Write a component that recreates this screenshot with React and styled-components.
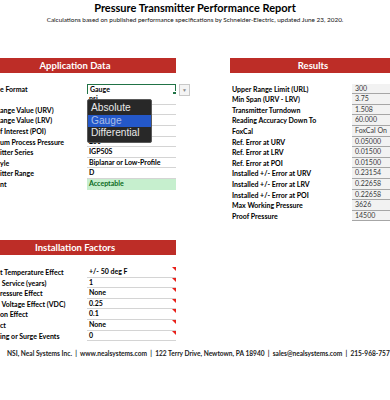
import { Fragment } from "react";
import styled, { createGlobalStyle } from "styled-components";

const GlobalStyle = createGlobalStyle`
  html, body {
    margin: 0;
    padding: 0;
    background: #ffffff;
    overflow: hidden;
  }
  body {
    font-family: Lato, "Open Sans", sans-serif;
    color: #000;
  }
`;

const ROW = 10.6;

const Page = styled.div`
  width: 390px;
  height: 400px;
  overflow: hidden;
  position: relative;
`;

const TitleBlock = styled.div`
  display: flex;
  flex-direction: column;
  align-items: center;
  padding-top: 1px;
`;

const Title = styled.div`
  font-size: 11px;
  font-weight: 700;
  line-height: 14px;
`;

const Subtitle = styled.div`
  font-size: 6.4px;
  line-height: 10px;
  color: #111;
`;

const Sheet = styled.div`
  display: flex;
  gap: 54px;
  margin-top: 33px;
  margin-left: -26px;
`;

const Column = styled.div`
  width: ${(p) => p.width}px;
  flex-shrink: 0;
  display: flex;
  flex-direction: column;
`;

const SectionHeader = styled.div`
  height: 15px;
  background: #bd2d27;
  color: #fff;
  font-weight: 700;
  font-size: 9.5px;
  display: flex;
  align-items: center;
  justify-content: center;
  margin-bottom: ${(p) => p.gap || 10.7}px;
  margin-top: ${(p) => p.top || 0}px;
`;

const Rows = styled.div`
  display: grid;
  grid-template-columns: ${(p) => p.cols};
  grid-auto-rows: ${ROW}px;
`;

const Label = styled.div`
  font-size: 7px;
  font-weight: 700;
  line-height: ${ROW}px;
  padding-left: ${(p) => p.pad || 0}px;
  white-space: pre;
  overflow: hidden;
`;

const Value = styled.div`
  position: relative;
  font-size: 7px;
  line-height: ${ROW - 1}px;
  padding-left: 2px;
  white-space: nowrap;
  border-bottom: 1px solid ${(p) => (p.plain ? "transparent" : "#d4d4d4")};
  font-weight: 700;
  background: ${(p) => (p.good ? "#c6efce" : "#fff")};
  color: ${(p) => (p.good ? "#0b6b1c" : "#000")};
`;

const ResultValue = styled.div`
  font-size: 7px;
  line-height: ${ROW - 1}px;
  padding-left: 3px;
  background: #f2f2f2;
  border-bottom: 1px solid #a6a6a6;
  color: #3a3a3a;
  white-space: nowrap;
`;

const Note = styled.span`
  position: absolute;
  top: 0;
  right: 0;
  width: 0;
  height: 0;
  border-top: 4px solid #e8201a;
  border-left: 4px solid transparent;
`;

const SelectCell = styled.div`
  position: relative;
  font-size: 7px;
  font-weight: 700;
  line-height: 9px;
  padding-left: 2px;
  margin-top: 0.5px;
  height: 9px;
  border: 1px solid #217346;
`;

const Handle = styled.span`
  position: absolute;
  right: -2px;
  bottom: -2px;
  width: 3px;
  height: 3px;
  background: #217346;
  border: 0.5px solid #fff;
`;

const ArrowButton = styled.div`
  position: absolute;
  left: 91px;
  top: -1px;
  width: 9px;
  height: 10px;
  background: #f4f4f4;
  border: 1px solid #c8c8c8;
  display: flex;
  align-items: center;
  justify-content: center;
  color: #8a8a8a;
  font-size: 5px;
`;

const Menu = styled.div`
  position: absolute;
  left: -1px;
  top: 14px;
  width: 63px;
  padding: 2px 0;
  background: #282828;
  border: 1px solid #5a5a5a;
  border-radius: 2px;
  z-index: 2;
  display: flex;
  flex-direction: column;
`;

const MenuItem = styled.div`
  font-family: "Liberation Sans", Arial, sans-serif;
  font-weight: 400;
  font-size: 10.2px;
  line-height: 12.5px;
  padding-left: 3px;
  color: ${(p) => (p.active ? "#a9bde6" : "#e8e8e8")};
  background: ${(p) => (p.active ? "#2458c9" : "transparent")};
`;

const Footer = styled.div`
  margin-top: 8px;
  padding-left: 7px;
  font-size: 6.6px;
  font-weight: 700;
  color: #222;
  white-space: pre;
`;

const appData = [
  ["", "psi"],
  ["ange Value (URV)", ""],
  ["ange Value (LRV)", ""],
  ["f Interest (POI)", ""],
  ["um Process Pressure", "250"],
  ["itter Series", "IGP50S"],
  ["yle", "Biplanar or Low-Profile"],
  ["itter Range", "D"],
];

const results = [
  ["Upper Range Limit (URL)", "300"],
  ["Min Span (URV - LRV)", "3.75"],
  ["Transmitter Turndown", "1.508"],
  ["Reading Accuracy Down To", "60.000"],
  ["FoxCal", "FoxCal On"],
  ["Ref. Error at URV", "0.05000"],
  ["Ref. Error at LRV", "0.01500"],
  ["Ref. Error at POI", "0.01500"],
  ["Installed +/- Error at URV", "0.23154"],
  ["Installed +/- Error at LRV", "0.22658"],
  ["Installed +/- Error at POI", "0.22658"],
  ["Max Working Pressure", "3626"],
  ["Proof Pressure", "14500"],
];

const factors = [
  ["t Temperature Effect", "+/- 50 deg F"],
  [" Service (years)", "1"],
  ["ressure Effect", "None"],
  [" Voltage Effect (VDC)", "0.25"],
  ["on Effect", "0.1"],
  ["ct", "None"],
  ["ing or Surge Events", "0"],
];

export default function App() {
  return (
    <Page>
      <GlobalStyle />
      <TitleBlock>
        <Title>Pressure Transmitter Performance Report</Title>
        <Subtitle>
          Calculations based on published performance specifications by
          Schneider-Electric, updated June 23, 2020.
        </Subtitle>
      </TitleBlock>

      <Sheet>
        <Column width={202}>
          <SectionHeader>Application Data</SectionHeader>
          <Rows cols="113px 89px">
            <Label pad={26}>e Format</Label>
            <SelectCell>
              Gauge
              <Handle />
              <ArrowButton>▼</ArrowButton>
              <Menu>
                <MenuItem>Absolute</MenuItem>
                <MenuItem active>Gauge</MenuItem>
                <MenuItem>Differential</MenuItem>
              </Menu>
            </SelectCell>
            {appData.map(([label, value], i) => (
              <Fragment key={i}>
                <Label pad={26}>{label}</Label>
                <Value>{value}</Value>
              </Fragment>
            ))}
            <Label pad={26}>nt</Label>
            <Value good plain>
              Acceptable
            </Value>
          </Rows>

          <SectionHeader top={50.7} gap={11.7}>
            Installation Factors
          </SectionHeader>
          <Rows cols="113px 89px">
            {factors.map(([label, value], i) => (
              <Fragment key={i}>
                <Label pad={26}>{label}</Label>
                <Value>
                  {value}
                  <Note />
                </Value>
              </Fragment>
            ))}
          </Rows>
        </Column>

        <Column width={166}>
          <SectionHeader>Results</SectionHeader>
          <Rows cols="122px 44px">
            {results.map(([label, value], i) => (
              <Fragment key={i}>
                <Label pad={2}>{label}</Label>
                <ResultValue>{value}</ResultValue>
              </Fragment>
            ))}
          </Rows>
        </Column>
      </Sheet>

      <Footer>
        {"NSI, Neal Systems Inc.  |  www.nealsystems.com  |  122 Terry Drive, Newtown, PA 18940  |  sales@nealsystems.com  |  215-968-7577"}
      </Footer>
    </Page>
  );
}
